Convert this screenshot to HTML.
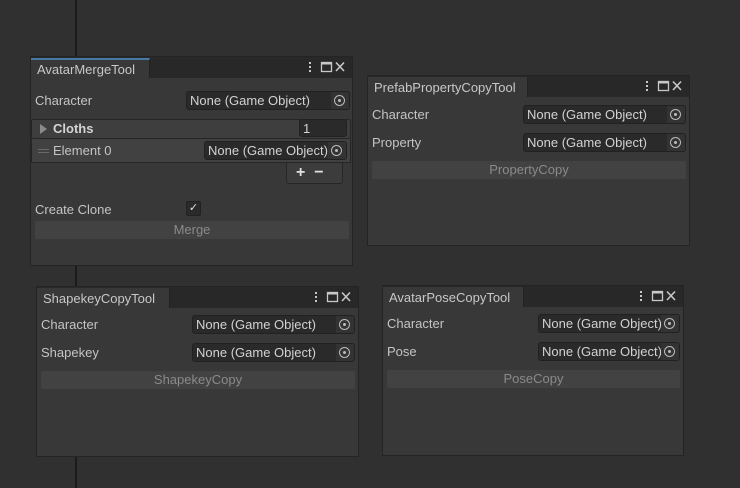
<!DOCTYPE html><html><head><style>
*{margin:0;padding:0;box-sizing:border-box}
body{width:740px;height:488px;background:#303030;position:relative;overflow:hidden;font-family:"Liberation Sans",sans-serif;font-size:13px;color:#c4c4c4}
.vl{position:absolute;left:75px;width:2px;background:#1b1b1b}
.win{position:absolute;background:#383838;border:1px solid #242424}
.tb{position:absolute;left:0;top:0;right:0;height:21px;background:#282828}
.tab{position:absolute;left:0;top:1px;height:20px;background:#383838;padding:3px 0 0 6px;color:#c8c8c8;font-size:13px;border-right:1px solid #232323}
.ic{position:absolute;top:3px;right:4px;width:44px;height:14px}
.a{position:absolute}
.lbl{position:absolute;color:#c4c4c4}
.fld{position:absolute;height:19px;background:#2a2a2a;border:1px solid #212121;border-radius:3px;color:#d2d2d2;padding:1px 0 0 3px;white-space:nowrap;overflow:hidden}
.fld .p{position:absolute;right:0;top:0;width:18px;height:17px;background:#333}
.fld .p:after{content:"";position:absolute;left:3px;top:3px;width:11px;height:11px;border:1.5px solid #bbb;border-radius:50%;box-sizing:border-box}
.fld .p:before{content:"";position:absolute;left:7px;top:7px;width:3px;height:3px;background:#bbb;border-radius:50%}
.btn{position:absolute;height:18px;background:#424242;border-radius:2px;color:#8a8a8a;text-align:center;padding-top:1px}
</style></head><body>
<div class="vl" style="top:0;height:57px"></div>
<div class="vl" style="top:266px;height:21px"></div>
<div class="vl" style="top:457px;height:31px"></div>

<svg width="0" height="0" style="position:absolute"><defs>
<g id="ic"><rect x="5" y="2" width="2" height="2" fill="#c8c8c8"/><rect x="5" y="6" width="2" height="2" fill="#c8c8c8"/><rect x="5" y="10" width="2" height="2" fill="#c8c8c8"/>
<rect x="17.5" y="2.5" width="10" height="9" fill="none" stroke="#c8c8c8" stroke-width="1.3"/><rect x="17.5" y="2.5" width="10" height="2" fill="#c8c8c8"/>
<path d="M32 2.5L40 11M40 2.5L32 11" stroke="#c8c8c8" stroke-width="1.6"/></g></defs></svg>

<!-- Window 1 -->
<div class="win" style="left:30px;top:56px;width:323px;height:210px">
 <div class="tb"></div>
 <div class="tab" style="width:119px;border-top:2px solid #4a78a6;padding-top:2px">AvatarMergeTool</div>
 <svg class="ic" viewBox="0 0 44 14"><use href="#ic"/></svg>
 <div class="lbl" style="left:4px;top:36px">Character</div>
 <div class="fld" style="left:155px;top:34px;width:164px">None (Game Object)<span class="p"></span></div>
 <div class="a" style="left:0;top:62px;width:320px;height:20px;background:#3e3e3e;border:1px solid #262626;border-radius:2px"></div>
 <div class="a" style="left:9px;top:67px;width:0;height:0;border-left:7px solid #8a8a8a;border-top:5px solid transparent;border-bottom:5px solid transparent"></div>
 <div class="lbl" style="left:22px;top:64px;font-weight:bold;color:#d4d4d4">Cloths</div>
 <div class="fld" style="left:268px;top:62px;width:48px;height:18px">1</div>
 <div class="a" style="left:0;top:82px;width:320px;height:24px;background:#414141;border:1px solid #262626;border-top:none"></div>
 <div class="a" style="left:7px;top:92px;width:11px;height:1px;background:#6a6a6a"></div>
 <div class="a" style="left:7px;top:95px;width:11px;height:1px;background:#6a6a6a"></div>
 <div class="lbl" style="left:22px;top:86px">Element 0</div>
 <div class="fld" style="left:173px;top:84px;width:143px">None (Game Object)<span class="p"></span></div>
 <div class="a" style="left:255px;top:106px;width:57px;height:21px;background:#3c3c3c;border:1px solid #262626;border-top:none;border-radius:0 0 3px 3px;color:#e0e0e0;font-size:16px;font-weight:bold;padding:0 0 0 9px;line-height:19px">+&nbsp;&nbsp;−</div>
 <div class="lbl" style="left:4px;top:145px">Create Clone</div>
 <div class="a" style="left:155px;top:144px;width:15px;height:15px;background:#2a2a2a;border:1px solid #222;border-radius:2px;color:#e0e0e0;font-size:11px;text-align:center;line-height:13px">✓</div>
 <div class="btn" style="left:4px;top:164px;width:314px">Merge</div>
</div>

<!-- Window 2 -->
<div class="win" style="left:367px;top:75px;width:323px;height:171px">
 <div class="tb"></div>
 <div class="tab" style="width:160px">PrefabPropertyCopyTool</div>
 <svg class="ic" viewBox="0 0 44 14"><use href="#ic"/></svg>
 <div class="lbl" style="left:4px;top:31px">Character</div>
 <div class="fld" style="left:155px;top:29px;width:163px">None (Game Object)<span class="p"></span></div>
 <div class="lbl" style="left:4px;top:59px">Property</div>
 <div class="fld" style="left:155px;top:57px;width:163px">None (Game Object)<span class="p"></span></div>
 <div class="btn" style="left:4px;top:85px;width:314px">PropertyCopy</div>
</div>

<!-- Window 3 -->
<div class="win" style="left:36px;top:286px;width:323px;height:171px">
 <div class="tb"></div>
 <div class="tab" style="width:133px">ShapekeyCopyTool</div>
 <svg class="ic" viewBox="0 0 44 14"><use href="#ic"/></svg>
 <div class="lbl" style="left:4px;top:30px">Character</div>
 <div class="fld" style="left:155px;top:28px;width:163px">None (Game Object)<span class="p"></span></div>
 <div class="lbl" style="left:4px;top:58px">Shapekey</div>
 <div class="fld" style="left:155px;top:56px;width:163px">None (Game Object)<span class="p"></span></div>
 <div class="btn" style="left:4px;top:84px;width:314px">ShapekeyCopy</div>
</div>

<!-- Window 4 -->
<div class="win" style="left:382px;top:285px;width:302px;height:171px">
 <div class="tb"></div>
 <div class="tab" style="width:141px">AvatarPoseCopyTool</div>
 <svg class="ic" viewBox="0 0 44 14"><use href="#ic"/></svg>
 <div class="lbl" style="left:4px;top:30px">Character</div>
 <div class="fld" style="left:155px;top:28px;width:142px">None (Game Object)<span class="p"></span></div>
 <div class="lbl" style="left:4px;top:58px">Pose</div>
 <div class="fld" style="left:155px;top:56px;width:142px">None (Game Object)<span class="p"></span></div>
 <div class="btn" style="left:4px;top:84px;width:293px">PoseCopy</div>
</div>
</body></html>
